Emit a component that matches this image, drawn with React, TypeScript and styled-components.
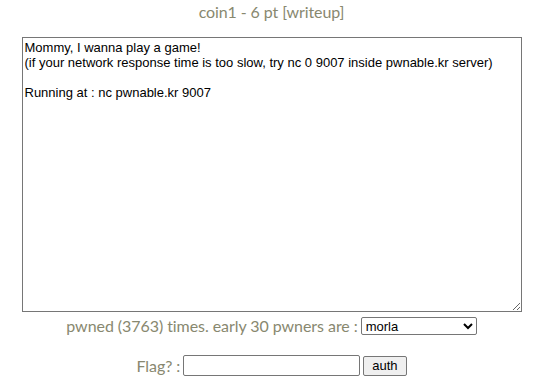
import React from "react";
import styled, { createGlobalStyle } from "styled-components";

const Global = createGlobalStyle`
  body {
    margin: 0;
    background: #ffffff;
    font-family: Lato, "Open Sans", sans-serif;
  }
`;

const Page = styled.div`
  display: flex;
  flex-direction: column;
  align-items: center;
  padding-top: 2px;
  color: #88886f;
  font-family: Lato, sans-serif;
  font-size: 16px;
`;

const Title = styled.div`
  height: 20px;
  line-height: 20px;
  margin-bottom: 15px;
  letter-spacing: -0.1px;
`;

const Description = styled.textarea`
  box-sizing: border-box;
  width: 500px;
  height: 275px;
  border: 1px solid #767676;
  border-radius: 0;
  padding: 2px;
  font-family: "Liberation Sans", Arial, sans-serif;
  font-size: 13px;
  line-height: 15px;
  color: #000;
  resize: both;
  outline: none;
`;

const Row = styled.div<{ $mt: number; $gap: number }>`
  display: flex;
  align-items: center;
  gap: ${(p) => p.$gap}px;
  margin-top: ${(p) => p.$mt}px;
  line-height: 20px;
`;

const Label = styled.span`
  letter-spacing: -0.06px;
`;

const Picker = styled.select`
  width: 116px;
  height: 18px;
  font-family: "Liberation Sans", Arial, sans-serif;
  font-size: 13px;
  color: #000;
  border: 1px solid #767676;
  border-radius: 2px;
  background: #fff;
`;

const FlagInput = styled.input`
  box-sizing: border-box;
  width: 177px;
  height: 21px;
  border: 1px solid #767676;
  border-radius: 2px;
  font-family: "Liberation Sans", Arial, sans-serif;
  font-size: 13px;
`;

const AuthButton = styled.button`
  box-sizing: border-box;
  height: 20px;
  padding: 0 8px;
  border: 1px solid #767676;
  border-radius: 2px;
  background: #efefef;
  font-family: "Liberation Sans", Arial, sans-serif;
  font-size: 13px;
  color: #000;
`;

const text = `Mommy, I wanna play a game!
(if your network response time is too slow, try nc 0 9007 inside pwnable.kr server)

Running at : nc pwnable.kr 9007`;

export default function App() {
  return (
    <>
      <Global />
      <Page>
        <Title>coin1 - 6 pt [writeup]</Title>
        <Description defaultValue={text} readOnly />
        <Row $mt={4} $gap={3}>
          <Label>pwned (3763) times. early 30 pwners are :</Label>
          <Picker defaultValue="morla">
            <option value="morla">morla</option>
          </Picker>
        </Row>
        <Row $mt={19} $gap={3}>
          <Label>Flag? :</Label>
          <FlagInput type="text" />
          <AuthButton>auth</AuthButton>
        </Row>
      </Page>
    </>
  );
}
